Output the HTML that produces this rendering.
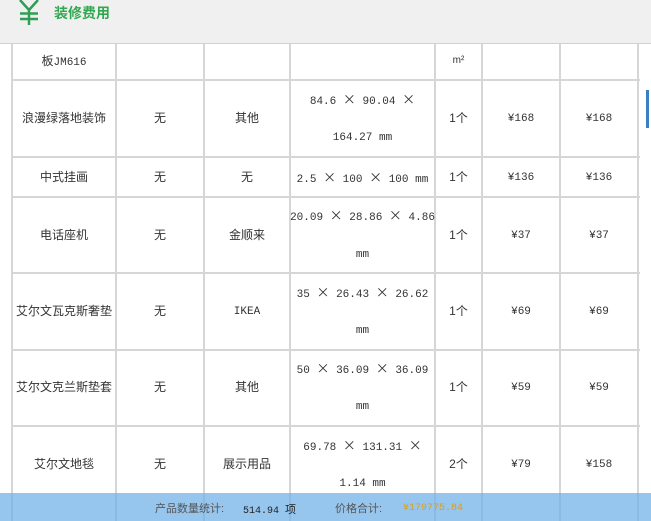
<!DOCTYPE html>
<html><head><meta charset="utf-8"><style>
body{margin:0;width:651px;height:521px;overflow:hidden;background:#fff;position:relative;font-family:"Liberation Sans","Noto Sans CJK SC",sans-serif;font-size:12px;color:#333;line-height:14px}
.hd{position:absolute;left:0;top:0;width:651px;height:43px;background:#f0f0f0;border-bottom:1px solid #d0d0d0}
.v{position:absolute;width:2px;background:#d6d6d6;top:44px;height:477px}
.h{position:absolute;left:12px;width:628px;height:2px;background:#d6d6d6}
.t{position:absolute;text-align:center;white-space:nowrap}
.m{font-family:"Liberation Mono","Noto Sans CJK SC",monospace;font-size:11px}
.x{font-family:"Noto Sans CJK SC",sans-serif;font-size:13px}
</style></head><body>
<div class="hd">
<svg style="position:absolute;left:0;top:0" width="50" height="30"><g stroke="#2e9e55" stroke-width="2.5" fill="none"><path d="M20 0 L29 10 L38 0 M29 10 V25 M20 13.5 H38 M20 19 H38"/></g></svg>
<div style="position:absolute;left:54px;top:6px;font-size:14px;color:#2fa84f;font-weight:bold;font-family:'Noto Sans CJK SC',sans-serif">装修费用</div>
</div>
<div class="v" style="left:11px"></div><div class="v" style="left:115px"></div><div class="v" style="left:203px"></div><div class="v" style="left:289px"></div><div class="v" style="left:434px"></div><div class="v" style="left:481px"></div><div class="v" style="left:559px"></div><div class="v" style="left:637px"></div>
<div class="h" style="top:79px"></div><div class="h" style="top:156px"></div><div class="h" style="top:196px"></div><div class="h" style="top:272px"></div><div class="h" style="top:349px"></div><div class="h" style="top:425px"></div>
<div style="position:absolute;left:646px;top:90px;width:3px;height:38px;background:#3b7fc0"></div>
<div class="t" style="left:12px;width:104px;top:54px">板<span class="m">JM616</span></div>
<div class="t" style="left:435px;width:47px;top:54px;font-size:10px">m²</div>

<div class="t" style="left:12px;width:104px;top:111px">浪漫绿落地装饰</div>
<div class="t" style="left:116px;width:88px;top:111px">无</div>
<div class="t" style="left:204px;width:86px;top:111px">其他</div>
<div class="t m" style="left:290px;width:145px;top:92px">84.6 <span class="x">×</span> 90.04 <span class="x">×</span></div>
<div class="t m" style="left:290px;width:145px;top:131px">164.27 mm</div>
<div class="t" style="left:435px;width:47px;top:111px">1个</div>
<div class="t m" style="left:482px;width:78px;top:112px">¥168</div>
<div class="t m" style="left:560px;width:78px;top:112px">¥168</div>

<div class="t" style="left:12px;width:104px;top:170px">中式挂画</div>
<div class="t" style="left:116px;width:88px;top:170px">无</div>
<div class="t" style="left:204px;width:86px;top:170px">无</div>
<div class="t m" style="left:290px;width:145px;top:170px">2.5 <span class="x">×</span> 100 <span class="x">×</span> 100 mm</div>
<div class="t" style="left:435px;width:47px;top:170px">1个</div>
<div class="t m" style="left:482px;width:78px;top:171px">¥136</div>
<div class="t m" style="left:560px;width:78px;top:171px">¥136</div>

<div class="t" style="left:12px;width:104px;top:228px">电话座机</div>
<div class="t" style="left:116px;width:88px;top:228px">无</div>
<div class="t" style="left:204px;width:86px;top:228px">金顺来</div>
<div class="t m" style="left:290px;width:145px;top:208px">20.09 <span class="x">×</span> 28.86 <span class="x">×</span> 4.86</div>
<div class="t m" style="left:290px;width:145px;top:248px">mm</div>
<div class="t" style="left:435px;width:47px;top:228px">1个</div>
<div class="t m" style="left:482px;width:78px;top:229px">¥37</div>
<div class="t m" style="left:560px;width:78px;top:229px">¥37</div>

<div class="t" style="left:12px;width:104px;top:304px">艾尔文瓦克斯奢垫</div>
<div class="t" style="left:116px;width:88px;top:304px">无</div>
<div class="t m" style="left:204px;width:86px;top:305px">IKEA</div>
<div class="t m" style="left:290px;width:145px;top:285px">35 <span class="x">×</span> 26.43 <span class="x">×</span> 26.62</div>
<div class="t m" style="left:290px;width:145px;top:324px">mm</div>
<div class="t" style="left:435px;width:47px;top:304px">1个</div>
<div class="t m" style="left:482px;width:78px;top:305px">¥69</div>
<div class="t m" style="left:560px;width:78px;top:305px">¥69</div>

<div class="t" style="left:12px;width:104px;top:380px">艾尔文克兰斯垫套</div>
<div class="t" style="left:116px;width:88px;top:380px">无</div>
<div class="t" style="left:204px;width:86px;top:380px">其他</div>
<div class="t m" style="left:290px;width:145px;top:361px">50 <span class="x">×</span> 36.09 <span class="x">×</span> 36.09</div>
<div class="t m" style="left:290px;width:145px;top:400px">mm</div>
<div class="t" style="left:435px;width:47px;top:380px">1个</div>
<div class="t m" style="left:482px;width:78px;top:381px">¥59</div>
<div class="t m" style="left:560px;width:78px;top:381px">¥59</div>

<div class="t" style="left:12px;width:104px;top:457px">艾尔文地毯</div>
<div class="t" style="left:116px;width:88px;top:457px">无</div>
<div class="t" style="left:204px;width:86px;top:457px">展示用品</div>
<div class="t m" style="left:290px;width:145px;top:438px">69.78 <span class="x">×</span> 131.31 <span class="x">×</span></div>
<div class="t m" style="left:290px;width:145px;top:477px">1.14 mm</div>
<div class="t" style="left:435px;width:47px;top:457px">2个</div>
<div class="t m" style="left:482px;width:78px;top:458px">¥79</div>
<div class="t m" style="left:560px;width:78px;top:458px">¥158</div>

<div style="position:absolute;left:0;top:493px;width:651px;height:28px;background:rgba(110,175,230,0.72)"></div>
<div style="position:absolute;left:155px;top:502px;font-size:11px;color:#555">产品数量统计:</div>
<div class="m" style="position:absolute;left:243px;top:502px;color:#222;font-size:10px">514.94 <span style="font-size:11px;font-family:'Noto Sans CJK SC',sans-serif">项</span></div>
<div style="position:absolute;left:335px;top:502px;font-size:11px;color:#555">价格合计:</div>
<div class="m" style="position:absolute;left:403px;top:502px;color:#d9a020;font-size:10px">¥179775.84</div>
</body></html>
